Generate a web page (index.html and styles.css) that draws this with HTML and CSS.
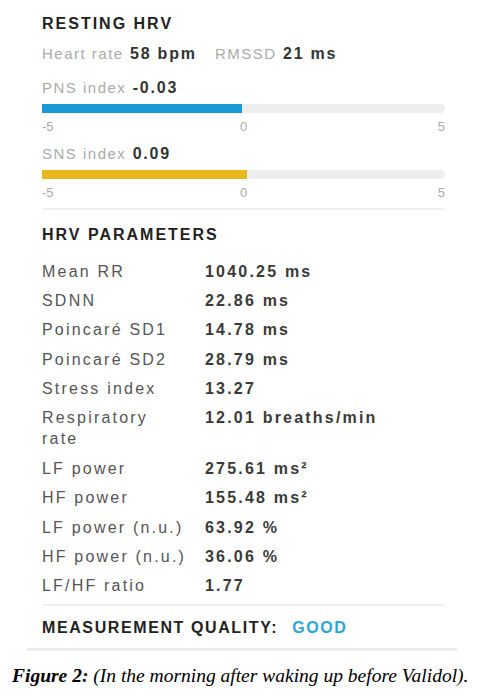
FILE: index.html
```html
<!DOCTYPE html>
<html lang="en">
  <head>
    <meta charset="UTF-8" />
    <meta name="viewport" content="width=device-width, initial-scale=1.0" />
    <title>HRV measurement</title>
    <link rel="stylesheet" href="styles.css">
  </head>
  <body>
    <div class="card">
      <section class="resting">
        <h2>RESTING HRV</h2>
        <p class="stats">
          <span class="lbl">Heart rate</span> <b>58 bpm</b>
          <span class="lbl gap">RMSSD</span> <b>21 ms</b>
        </p>
        <div class="index">
          <p><span class="lbl">PNS index</span> <b>-0.03</b></p>
          <div class="track"><div class="fill pns" style="width: 49.7%;"></div></div>
          <div class="scale"><span>-5</span><span>0</span><span>5</span></div>
        </div>
        <div class="index">
          <p><span class="lbl">SNS index</span> <b>0.09</b></p>
          <div class="track"><div class="fill sns" style="width: 50.9%;"></div></div>
          <div class="scale"><span>-5</span><span>0</span><span>5</span></div>
        </div>
      </section>
      <section class="params">
        <h2>HRV PARAMETERS</h2>
        <dl>
          <dt>Mean RR</dt><dd>1040.25 ms</dd>
          <dt>SDNN</dt><dd>22.86 ms</dd>
          <dt>Poincaré SD1</dt><dd>14.78 ms</dd>
          <dt>Poincaré SD2</dt><dd>28.79 ms</dd>
          <dt>Stress index</dt><dd>13.27</dd>
          <dt>Respiratory<br>rate</dt><dd>12.01 breaths/min</dd>
          <dt>LF power</dt><dd>275.61 ms²</dd>
          <dt>HF power</dt><dd>155.48 ms²</dd>
          <dt>LF power (n.u.)</dt><dd>63.92 %</dd>
          <dt>HF power (n.u.)</dt><dd>36.06 %</dd>
          <dt>LF/HF ratio</dt><dd>1.77</dd>
        </dl>
      </section>
      <h2 class="quality">MEASUREMENT QUALITY: <span>GOOD</span></h2>
    </div>
    <p class="caption"><b>Figure 2:</b> (In the morning after waking up before Validol).</p>
  </body>
</html>
```

FILE: styles.css
```css
body {
  margin: 0;
  font-family: "Liberation Sans", Arial, sans-serif;
  color: #333;
  background: #fff;
}
p {
  margin: 0;
}
.card {
  width: 403px;
  margin-left: 27px;
  padding: 14px 12px 10px 15px;
  border-bottom: 3px solid #eeeeee;
}
h2 {
  margin: 0;
  font-size: 16px;
  line-height: 20px;
  font-weight: bold;
  letter-spacing: 2px;
  color: #222;
}
.lbl {
  color: #aaa;
  font-size: 15px;
  letter-spacing: 1.5px;
}
.stats,
.index p {
  font-size: 16px;
  line-height: 22px;
  letter-spacing: 1.8px;
}
.stats {
  margin-top: 9px;
}
.stats .gap {
  margin-left: 12px;
}
.index p {
  margin-top: 12px;
}
.index + .index p {
  margin-top: 8px;
}
.track {
  height: 9px;
  margin-top: 5px;
  background: #eeeeee;
  border-radius: 0 5px 5px 0;
}
.fill {
  height: 100%;
}
.pns {
  background: #1a9bd7;
}
.sns {
  background: #e9b71f;
}
.scale {
  display: grid;
  grid-template-columns: 1fr 1fr 1fr;
  margin-top: 6px;
  font-size: 13px;
  line-height: 16px;
  color: #aaa;
}
.scale span:nth-child(2) {
  text-align: center;
}
.scale span:nth-child(3) {
  text-align: right;
}
.resting {
  padding-bottom: 7px;
  border-bottom: 2px solid #f0f0f0;
}
.params {
  padding-top: 15px;
  padding-bottom: 8px;
  border-bottom: 2px solid #f0f0f0;
}
dl {
  display: grid;
  grid-template-columns: 158px 1fr;
  column-gap: 5px;
  row-gap: 8.4px;
  margin: 15.5px 0 0;
  font-size: 16px;
  line-height: 21px;
  letter-spacing: 2.2px;
}
dt {
  color: #555;
}
dd {
  margin: 0;
  font-weight: bold;
  color: #3a3a3a;
}
.quality {
  margin-top: 12px;
  letter-spacing: 1.6px;
}
.quality span {
  margin-left: 8px;
  color: #2aa4dc;
}
.caption {
  margin: 14px 0 0 12px;
  font-family: "Liberation Serif", "Times New Roman", serif;
  font-style: italic;
  font-size: 19.5px;
  line-height: 22px;
  color: #000;
}
```
